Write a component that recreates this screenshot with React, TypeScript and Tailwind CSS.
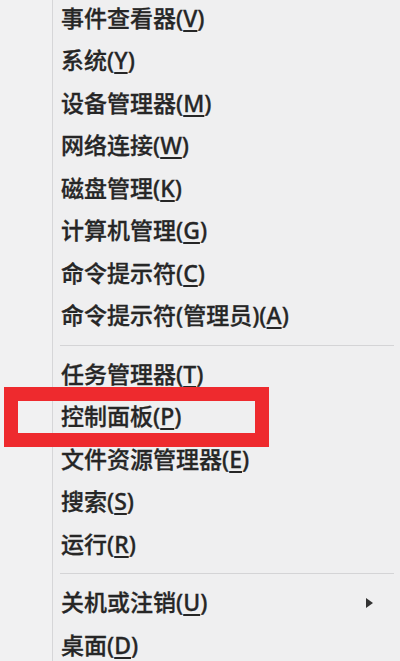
import React from "react";

type Item = { label: string; key: string; tail?: string; arrow?: boolean };

const groups: Item[][] = [
	[
		{ label: "事件查看器", key: "V" },
		{ label: "系统", key: "Y" },
		{ label: "设备管理器", key: "M" },
		{ label: "网络连接", key: "W" },
		{ label: "磁盘管理", key: "K" },
		{ label: "计算机管理", key: "G" },
		{ label: "命令提示符", key: "C" },
		{ label: "命令提示符(管理员)", key: "A" },
	],
	[
		{ label: "任务管理器", key: "T" },
		{ label: "控制面板", key: "P" },
		{ label: "文件资源管理器", key: "E" },
		{ label: "搜索", key: "S" },
		{ label: "运行", key: "R" },
	],
	[
		{ label: "关机或注销", key: "U", arrow: true },
		{ label: "桌面", key: "D" },
	],
];

function Row({ item }: { item: Item }) {
	return (
		<div className="h-[42.5px] flex items-center pl-2 pr-4">
			<span className="text-[23px] leading-none text-[#262626] font-medium whitespace-nowrap [-webkit-text-stroke:0.3px_#262626]">
				{item.label}(<span className="underline underline-offset-[3px] decoration-[1.5px]">{item.key}</span>)
			</span>
			{item.arrow && (
				<svg className="ml-auto mr-[11px]" width="7" height="10" viewBox="0 0 7 10">
					<path d="M0 0 L7 5 L0 10 Z" fill="#333" />
				</svg>
			)}
		</div>
	);
}

export default function App() {
	return (
		<div
			className="relative w-[400px] h-[661px] overflow-hidden bg-[#efeff0] flex"
			style={{ fontFamily: '"Noto Sans", "Noto Sans CJK SC", sans-serif' }}
		>
			<div className="w-[52px] shrink-0 bg-[#f1f1f2]" />
			<div className="w-px shrink-0 bg-[#d6d6d8]" />
			<div className="flex-1 mt-[-3px]">
				{groups.map((g, gi) => (
					<div key={gi}>
						{gi > 0 && (
							<div className="h-4 flex items-center pl-[7px] pr-[6px]">
								<div className="h-px w-full bg-[#d4d4d6]" />
							</div>
						)}
						{g.map((it) => (
							<Row key={it.label} item={it} />
						))}
					</div>
				))}
			</div>
			<div className="absolute left-[4px] top-[387px] w-[265px] h-[60px] border-[14px] border-[#ee2a2e]" />
		</div>
	);
}
